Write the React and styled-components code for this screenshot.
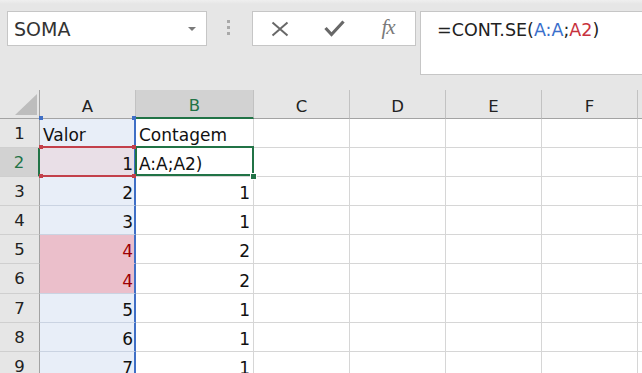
import React from "react";
import styled, { createGlobalStyle, css } from "styled-components";

const GlobalStyle = createGlobalStyle`
  html, body { margin: 0; padding: 0; background: #e6e6e6; }
  body { overflow: hidden; }
`;

const FONT = `"DejaVu Sans", "Liberation Sans", sans-serif`;
const GREEN = "#217346";
const BLUE = "#3f6fc6";
const RED = "#c3404b";

const Page = styled.div`
  width: 642px;
  height: 373px;
  overflow: hidden;
  background: #e6e6e6;
  display: flex;
  flex-direction: column;
`;

const Toolbar = styled.div`
  height: 90px;
  flex: none;
  box-sizing: border-box;
  display: flex;
  align-items: flex-start;
  padding: 11px 0 0 7px;
  background: linear-gradient(#efefef, #e6e6e6 4px);
`;

const NameBox = styled.div`
  width: 200px;
  height: 35px;
  flex: none;
  box-sizing: border-box;
  border: 1px solid #c6c6c6;
  background: #fff;
  display: flex;
  align-items: center;
  justify-content: space-between;
  padding: 0 10px 0 6px;
  font: 19px ${FONT};
  color: #333;
`;

const Caret = styled.span`
  width: 0;
  height: 0;
  border-left: 4px solid transparent;
  border-right: 4px solid transparent;
  border-top: 4px solid #7a7a7a;
`;

const Grip = styled.div`
  flex: none;
  margin: 9px 0 0 20px;
  display: flex;
  flex-direction: column;
  gap: 3px;
`;

const GripDot = styled.span`
  width: 3px;
  height: 3px;
  background: #a9a9a9;
`;

const ButtonGroup = styled.div`
  flex: none;
  margin-left: 22px;
  width: 164px;
  height: 35px;
  box-sizing: border-box;
  border: 1px solid #c6c6c6;
  background: #fff;
  display: flex;
  align-items: center;
`;

const IconSlot = styled.span`
  width: 54px;
  height: 33px;
  display: flex;
  align-items: center;
  justify-content: center;
`;

const FxText = styled.span`
  font: italic 21px "Liberation Serif", serif;
  color: #7a7a7a;
  letter-spacing: -1px;
  margin-top: -2px;
`;

const FormulaInput = styled.div`
  flex: none;
  margin-left: 4px;
  width: 240px;
  height: 64px;
  box-sizing: border-box;
  border: 1px solid #c6c6c6;
  background: #fff;
  padding: 8px 0 0 16px;
  font: 17.5px/20px ${FONT};
  color: #222;
  white-space: nowrap;
`;

const Ref = styled.span`
  color: ${(p) => p.$color};
`;

const Sheet = styled.div`
  flex: 1;
  display: grid;
  grid-template-columns: 40px 96px 118px 96px 96px 96px 96px 96px;
  grid-template-rows: 29px 29px 29px 29px 29px 29px 30px 29px 29px 29px;
  background: #fff;
  overflow: hidden;
`;

const headerBase = css`
  box-sizing: border-box;
  background: ${(p) => (p.$selected ? "#d2d2d2" : "#e6e6e6")};
  color: ${(p) => (p.$selected ? GREEN : "#222")};
  font: 16.5px ${FONT};
  display: flex;
  align-items: center;
  justify-content: center;
`;

const Corner = styled.div`
  ${headerBase};
  position: relative;
  border-right: 1px solid #a3a3a3;
  border-bottom: 1px solid #a3a3a3;
  align-items: flex-end;
  justify-content: flex-end;
  padding: 0 2px 3px 0;
`;

const ColHeader = styled.div`
  ${headerBase};
  padding-top: 4px;
  border-right: 1px solid #c2c2c2;
  border-bottom: ${(p) => (p.$selected ? `2px solid ${GREEN}` : "1px solid #a3a3a3")};
`;

const RowHeader = styled.div`
  ${headerBase};
  border-right: ${(p) => (p.$selected ? `2px solid ${GREEN}` : "1px solid #a3a3a3")};
  border-bottom: 1px solid #cfcfcf;
`;

const Cell = styled.div`
  position: relative;
  box-sizing: border-box;
  display: flex;
  align-items: flex-end;
  justify-content: ${(p) => (p.$right ? "flex-end" : "flex-start")};
  padding: 0 3px 2px 3px;
  border-right: 1px solid #d6d6d6;
  border-bottom: 1px solid #d6d6d6;
  background: #fff;
  font: 17px/20px ${FONT};
  color: #111;
  white-space: nowrap;
`;

const fills = {
  blue: "#e8eef8",
  ref: "#e9dfe7",
  dup: "#ebbfcb",
};

const RangeCell = styled(Cell)`
  background: ${(p) => fills[p.$fill]};
  color: ${(p) => (p.$fill === "dup" ? "#9c0006" : "#111")};
  border-right: 2px solid ${BLUE};
  border-bottom-color: ${(p) => (p.$fill === "dup" && p.$nextDup ? fills.dup : "#cad3e2")};
  padding-right: 1px;
`;

const ActiveCell = styled(Cell)`
  z-index: 2;
  &::before {
    content: "";
    position: absolute;
    left: -1px;
    top: -2px;
    right: -1px;
    bottom: 0;
    border: 2px solid ${GREEN};
    pointer-events: none;
  }
  &::after {
    content: "";
    position: absolute;
    right: -4px;
    bottom: -4px;
    width: 5px;
    height: 5px;
    background: ${GREEN};
    border: 1px solid #fff;
  }
`;

const RefOutline = styled.span`
  position: absolute;
  left: 0;
  right: -2px;
  top: -2px;
  bottom: -1px;
  border-top: 2px solid ${RED};
  border-bottom: 2px solid ${RED};
  pointer-events: none;
  z-index: 1;
`;

const Handle = styled.span`
  position: absolute;
  width: 4px;
  height: 4px;
  background: ${(p) => p.$color};
  z-index: 3;
  ${(p) => (p.$left ? "left: -1px;" : "right: -2px;")}
  ${(p) => (p.$top ? "top: -3px;" : "bottom: -2px;")}
`;

const CornerTriangle = () => (
  <svg width="22" height="21" viewBox="0 0 22 21">
    <polygon points="22,0 22,21 0,21" fill="#bdbdbd" />
  </svg>
);

const CancelIcon = () => (
  <svg width="18" height="16" viewBox="0 0 18 16">
    <path d="M1.5 1.5 L16.5 14.5 M16.5 1.5 L1.5 14.5" stroke="#686868" strokeWidth="2" fill="none" />
  </svg>
);

const CheckIcon = () => (
  <svg width="21" height="17" viewBox="0 0 21 17">
    <path d="M1.5 8 L7.5 14.5 L19.5 1.5" stroke="#686868" strokeWidth="3.2" fill="none" strokeLinejoin="miter" />
  </svg>
);

const columns = ["A", "B", "C", "D", "E", "F", "G"];

const rows = [
  { a: "Valor", aLeft: true, b: "Contagem", bLeft: true },
  { a: "1", b: "A:A;A2)", bLeft: true, ref: true },
  { a: "2", b: "1" },
  { a: "3", b: "1" },
  { a: "4", b: "2", dup: true },
  { a: "4", b: "2", dup: true },
  { a: "5", b: "1" },
  { a: "6", b: "1" },
  { a: "7", b: "1" },
];

export default function App() {
  return (
    <Page>
      <GlobalStyle />
      <Toolbar>
        <NameBox>
          <span>SOMA</span>
          <Caret />
        </NameBox>
        <Grip>
          <GripDot />
          <GripDot />
          <GripDot />
        </Grip>
        <ButtonGroup>
          <IconSlot>
            <CancelIcon />
          </IconSlot>
          <IconSlot>
            <CheckIcon />
          </IconSlot>
          <IconSlot>
            <FxText>fx</FxText>
          </IconSlot>
        </ButtonGroup>
        <FormulaInput>
          =CONT.SE(<Ref $color="#3a6fcb">A:A</Ref>;<Ref $color="#c8313d">A2</Ref>)
        </FormulaInput>
      </Toolbar>
      <Sheet>
        <Corner>
          <CornerTriangle />
        </Corner>
        {columns.map((c) => (
          <ColHeader key={c} $selected={c === "B"}>
            {c}
          </ColHeader>
        ))}
        {rows.map((r, i) => {
          const n = i + 1;
          const fill = r.ref ? "ref" : r.dup ? "dup" : "blue";
          const next = rows[i + 1];
          return (
            <React.Fragment key={n}>
              <RowHeader $selected={n === 2}>{n}</RowHeader>
              <RangeCell $fill={fill} $right={!r.aLeft} $nextDup={next && next.dup && r.dup}>
                {r.a}
                {n === 1 && (
                  <>
                    <Handle $color={BLUE} $left $top />
                    <Handle $color={BLUE} $top />
                  </>
                )}
                {r.ref && (
                  <>
                    <RefOutline />
                    <Handle $color={RED} $left $top />
                    <Handle $color={RED} $top />
                    <Handle $color={RED} $left />
                    <Handle $color={RED} />
                  </>
                )}
              </RangeCell>
              {n === 2 ? (
                <ActiveCell>{r.b}</ActiveCell>
              ) : (
                <Cell $right={!r.bLeft}>{r.b}</Cell>
              )}
              {columns.slice(2).map((c) => (
                <Cell key={c} />
              ))}
            </React.Fragment>
          );
        })}
      </Sheet>
    </Page>
  );
}
